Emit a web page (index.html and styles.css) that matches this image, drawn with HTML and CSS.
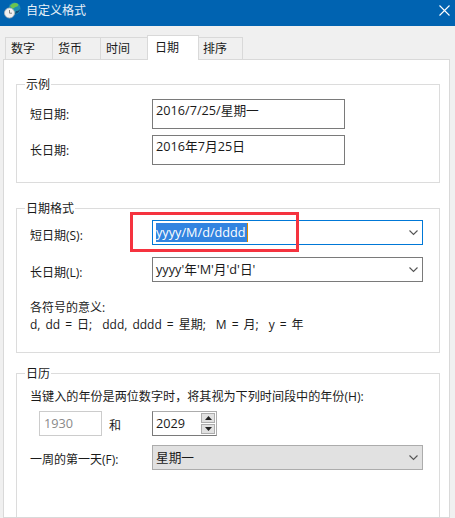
FILE: index.html
```html
<!DOCTYPE html>
<html lang="zh-CN">
<head>
<meta charset="utf-8">
<title>自定义格式</title>
<link rel="stylesheet" href="styles.css">
</head>
<body>
<div class="window">
  <header class="titlebar">
    <svg class="app-icon" width="17" height="17" viewBox="0 0 17 17">
      <circle cx="10.500" cy="6.500" r="6" fill="#1f8fb0"/>
      <path d="M6 4c2-3 6-4 8-2 1 2-1 3-3 3-1 2-3 2-5-1z" fill="#6cc44f"/>
      <path d="M12 9c2 0 3.500-.5 4-2.500 0 3-2 5-5 5.500z" fill="#0f4a78"/>
      <circle cx="5.500" cy="11" r="5" fill="#f0f0f0" stroke="#b5b5b5" stroke-width=".8"/>
      <path d="M5.500 8v3.200h2.500" fill="none" stroke="#777" stroke-width=".9"/>
    </svg>
    <span class="title">自定义格式</span>
    <svg class="close" width="11" height="11" viewBox="0 0 11 11"><path d="M.5.5l10 10M10.500.5l-10 10" stroke="#fff" stroke-width="1.100" fill="none"/></svg>
  </header>
  <nav class="tabs">
    <span class="tab">数字</span>
    <span class="tab">货币</span>
    <span class="tab">时间</span>
    <span class="tab active">日期</span>
    <span class="tab">排序</span>
  </nav>
  <main class="panel">
    <section class="group sample">
      <h2 class="legend">示例</h2>
      <div class="row">
        <label class="label">短日期:</label>
        <div class="output">2016/7/25/星期一</div>
      </div>
      <div class="row">
        <label class="label">长日期:</label>
        <div class="output">2016年7月25日</div>
      </div>
    </section>
    <section class="group format">
      <h2 class="legend">日期格式</h2>
      <div class="row">
        <label class="label">短日期(S):</label>
        <div class="combo focus">
          <span class="value"><span class="selected">yyyy/M/d/dddd</span></span>
          <svg class="chev" width="9" height="6" viewBox="0 0 9 6"><path d="M.5.500L4.500 4.500 8.500.500" fill="none" stroke="#555" stroke-width="1.100"/></svg>
        </div>
      </div>
      <div class="row">
        <label class="label">长日期(L):</label>
        <div class="combo">
          <span class="value">yyyy'年'M'月'd'日'</span>
          <svg class="chev" width="9" height="6" viewBox="0 0 9 6"><path d="M.5.500L4.500 4.500 8.500.500" fill="none" stroke="#555" stroke-width="1.100"/></svg>
        </div>
      </div>
      <p class="note">各符号的意义:<br><span class="legend-line">d, dd = 日;&nbsp; ddd, dddd = 星期;&nbsp; M = 月;&nbsp; y = 年</span></p>
    </section>
    <section class="group calendar">
      <h2 class="legend">日历</h2>
      <p class="desc">当键入的年份是两位数字时，将其视为下列时间段中的年份(H):</p>
      <div class="years">
        <div class="year-from">1930</div>
        <span class="and">和</span>
        <div class="spinner">
          <span class="spin-value">2029</span>
          <span class="spin-buttons">
            <span class="spin-btn"><svg width="7" height="4" viewBox="0 0 7 4"><path d="M3.500 0L7 4H0z" fill="#222"/></svg></span>
            <span class="spin-btn"><svg width="7" height="4" viewBox="0 0 7 4"><path d="M0 0h7L3.500 4z" fill="#222"/></svg></span>
          </span>
        </div>
      </div>
      <div class="row first-day">
        <label class="label">一周的第一天(F):</label>
        <div class="combo disabled">
          <span class="value">星期一</span>
          <svg class="chev" width="9" height="6" viewBox="0 0 9 6"><path d="M.5.500L4.500 4.500 8.500.500" fill="none" stroke="#555" stroke-width="1.100"/></svg>
        </div>
      </div>
    </section>
  </main>
</div>
<div class="annotation"></div>
</body>
</html>
```

FILE: styles.css
```css
* { box-sizing: border-box; }
html, body { margin: 0; padding: 0; }
body {
  width: 455px;
  height: 518px;
  overflow: hidden;
  position: relative;
  background: #f0f0f0;
  color: #1a1a1a;
  font-family: "Open Sans", "Noto Sans CJK SC", sans-serif;
  font-size: 12.7px;
  line-height: 17px;
}
.window { display: flex; flex-direction: column; height: 518px; }
.titlebar {
  height: 26px;
  flex: none;
  background: #0063b1;
  color: #fff;
  display: flex;
  align-items: center;
  padding: 0 5px 6px 4px;
}
.app-icon { margin-right: 5px; }
.title { flex: 1; font-size: 12px; color: #e8f1f8; }
.tabs {
  height: 33px;
  flex: none;
  display: flex;
  align-items: flex-end;
  padding: 0 0 0 5px;
}
.tab {
  width: 49px;
  height: 22px;
  background: #f0f0f0;
  border: 1px solid #d9d9d9;
  border-bottom: 0;
  margin-right: -1px;
  padding: 2px 0 0 5px;
  font-size: 12px;
}
.tab:first-child { width: 48px; }
.tab:nth-child(3) { width: 48px; }
.tab.active {
  width: 52px;
  height: 25px;
  background: #fff;
  position: relative;
  margin-bottom: -1px;
  padding-top: 3px;
  padding-left: 7px;
  z-index: 1;
}
.tab:last-child { width: 45px; padding-left: 4px; }
.panel {
  flex: 1;
  margin: 0 5px 0 3px;
  background: #fff;
  border: 1px solid #d9d9d9;
  padding: 24px 9px 0 12px;
  min-height: 0;
  overflow: hidden;
}
.group {
  position: relative;
  border: 1px solid #dcdcdc;
  padding: 0 0 0 13px;
}
.legend {
  position: absolute;
  top: -9px;
  left: 8px;
  margin: 0;
  padding: 0 1px;
  background: #fff;
  font-size: 12px;
  font-weight: 400;
}
.sample { height: 99px; padding-top: 14px; margin-bottom: 25px; }
.sample .row { margin-bottom: 6px; }
.format { height: 145px; padding-top: 11px; margin-bottom: 20px; }
.calendar { height: 200px; padding-top: 14px; }
.row { display: flex; align-items: center; margin-bottom: 7px; }
.label { width: 122px; flex: none; font-size: 12px; }
.first-day .label { padding-top: 3px; }
.output {
  width: 193px;
  height: 30px;
  border: 1px solid #7a7a7a;
  padding: 2px 3px;
}
.combo {
  width: 271px;
  height: 25px;
  border: 1px solid #7a7a7a;
  display: flex;
  align-items: center;
  justify-content: space-between;
  padding: 0 4px 0 3px;
  margin-bottom: 5px;
}
.combo.focus { border-color: #0078d7; }
.selected { background: #3284e0; color: #fff; display: inline-block; height: 19px; line-height: 18px; padding-right: 1px; border-right: 1px solid #d98a00; }
.combo.disabled { background: #e1e1e1; border-color: #acacac; margin-bottom: 0; }
.note { margin: 12px 0 0; font-size: 12px; line-height: 17px; }
.legend-line { word-spacing: 1.9px; }
.desc { margin: 0 0 6px; font-size: 12.1px; white-space: nowrap; }
.years { display: flex; align-items: center; margin: 0 0 9px 9px; }
.year-from {
  width: 63px;
  height: 25px;
  border: 1px solid #ccc;
  color: #8a8a8a;
  padding: 3px 4px;
}
.and { width: 50px; padding: 3px 0 0 7px; font-size: 12px; }
.spinner {
  width: 65px;
  height: 25px;
  border: 1px solid #7a7a7a;
  border-right-color: #acacac;
  border-top-color: #acacac;
  display: flex;
  justify-content: space-between;
  padding-left: 3px;
  line-height: 22px;
}
.spin-buttons { display: flex; flex-direction: column; width: 16px; gap: 1px; padding: 1px; }
.spin-btn {
  flex: 1;
  background: #e1e1e1;
  border: 1px solid #adadad;
  display: flex;
  align-items: center;
  justify-content: center;
}
.annotation {
  position: absolute;
  left: 130px;
  top: 212px;
  width: 169px;
  height: 40px;
  border: 3px solid #f5333f;
}
```
